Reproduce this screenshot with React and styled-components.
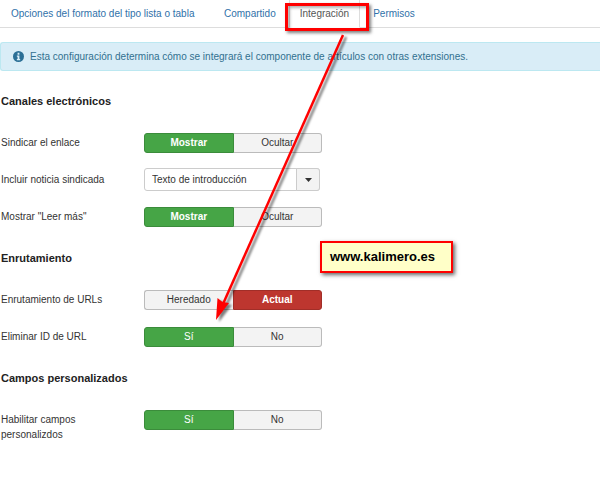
import { useState } from 'react';
import styled, { createGlobalStyle } from 'styled-components';

const tabs = ['Opciones del formato del tipo lista o tabla', 'Compartido', 'Integración', 'Permisos'];

const Toggle = ({ name, label, options, initial, bold }) => {
    const [value, setValue] = useState(initial);

    return (
        <Row>
            <Label as="span" id={`${name}-label`}>{label}</Label>
            <Group role="radiogroup" aria-labelledby={`${name}-label`}>
                {options.map((option) => (
                    <Option
                        key={option.text}
                        $color={value === option.text ? option.color : null}
                        $bold={bold && value === option.text}
                    >
                        <Radio
                            type="radio"
                            name={name}
                            checked={value === option.text}
                            onChange={() => setValue(option.text)}
                        />
                        {option.text}
                    </Option>
                ))}
            </Group>
        </Row>
    );
};

const show = [{ text: 'Mostrar', color: 'green' }, { text: 'Ocultar', color: 'red' }];
const routing = [{ text: 'Heredado', color: 'green' }, { text: 'Actual', color: 'red' }];
const yesNo = [{ text: 'Sí', color: 'green' }, { text: 'No', color: 'red' }];

const App = () => {
    const [active, setActive] = useState('Integración');

    return (
        <Page>
            <GlobalStyle />
            <Tabs>
                {tabs.map((tab) => (
                    <Tab key={tab} href="#" $active={tab === active} onClick={() => setActive(tab)}>
                        {tab}
                    </Tab>
                ))}
            </Tabs>

            <Alert>
                <svg width="11" height="11" viewBox="0 0 12 12" aria-hidden="true">
                    <circle cx="6" cy="6" r="6" fill="#2b6f96" />
                    <path d="M5 2h2v2H5zM4.2 5H7v3.700h.8V10H4.2V8.700H5V6.200h-.8z" fill="#d9edf7" />
                </svg>
                Esta configuración determina cómo se integrará el componente de artículos con otras extensiones.
            </Alert>

            <Heading>Canales electrónicos</Heading>
            <Fields>
                <Toggle name="feed" label="Sindicar el enlace" options={show} initial="Mostrar" bold />
                <Row>
                    <Label htmlFor="summary">Incluir noticia sindicada</Label>
                    <SelectBox>
                        <Select id="summary">
                            <option>Texto de introducción</option>
                            <option>Texto completo</option>
                        </Select>
                        <Caret>
                            <svg width="7" height="4" viewBox="0 0 7 4" aria-hidden="true">
                                <path d="M0 0h7L3.500 4z" fill="#333" />
                            </svg>
                        </Caret>
                    </SelectBox>
                </Row>
                <Toggle name="readmore" label={'Mostrar "Leer más"'} options={show} initial="Mostrar" bold />
            </Fields>

            <Heading>Enrutamiento</Heading>
            <Fields>
                <Toggle name="routing" label="Enrutamiento de URLs" options={routing} initial="Actual" bold />
                <Toggle name="ids" label="Eliminar ID de URL" options={yesNo} initial="Sí" />
            </Fields>

            <Heading>Campos personalizados</Heading>
            <Fields>
                <Toggle name="custom" label="Habilitar campos personalizdos" options={yesNo} initial="Sí" />
            </Fields>

            <Marker />
            <Arrow width="170" height="310" viewBox="200 25 170 310" aria-hidden="true">
                <path d="M343 35L223 304" stroke="#f00" strokeWidth="2.500" />
                <path d="M216 320L217.500 298L222.500 302L229 303Z" fill="#f00" />
            </Arrow>
            <Note>www.kalimero.es</Note>
        </Page>
    );
};

export default App;

const GlobalStyle = createGlobalStyle`
    * {
        box-sizing: border-box;
    }
    body {
        margin: 0;
        background: #fff;
        color: #333;
        font-family: "Liberation Sans", Arial, sans-serif;
        font-size: 10px;
        line-height: 15px;
    }
`;

const Page = styled.main`
    position: relative;
    padding-bottom: 24px;
`;

const Tabs = styled.nav`
    display: grid;
    grid-template-columns: 211px repeat(3, max-content);
    gap: 2px;
    height: 28px;
    border-bottom: 1px solid #ddd;
`;

const Tab = styled.a`
    height: 28px;
    padding: 6px 10px;
    border: 1px solid ${(props) => (props.$active ? '#ddd' : 'transparent')};
    border-top: 0;
    border-bottom-color: ${(props) => (props.$active ? '#fff' : 'transparent')};
    color: ${(props) => (props.$active ? '#555' : '#3071a9')};
    text-decoration: none;
    white-space: nowrap;
`;

const Alert = styled.div`
    display: flex;
    align-items: center;
    gap: 6px;
    margin: 14px 0 23px;
    padding: 6px 12px;
    border: 1px solid #bce8f1;
    border-right: 0;
    border-radius: 3px 0 0 3px;
    background: #d9edf7;
    color: #31708f;
`;

const Heading = styled.h2`
    margin: 22px 0 22px 1px;
    color: #222;
    font-size: 11px;
    line-height: 15px;
`;

const Fields = styled.div`
    display: flex;
    flex-direction: column;
    gap: 13px;
`;

const Row = styled.div`
    display: grid;
    grid-template-columns: 143px 178px;
    min-height: 24px;
    padding-left: 1px;
`;

const Label = styled.label`
    padding: 4px 24px 0 0;
`;

const Group = styled.div`
    display: flex;
    height: 20px;
    margin-top: 2px;
`;

const fills = {
    green: ['#46a546', '#3b8c3b'],
    red: ['#bd362f', '#a12e28'],
};

const Option = styled.label`
    position: relative;
    flex: 1;
    border: 1px solid ${(props) => (props.$color ? fills[props.$color][1] : '#bbb')};
    background: ${(props) => (props.$color ? fills[props.$color][0] : '#f3f3f3')};
    color: ${(props) => (props.$color ? '#fff' : '#333')};
    font-weight: ${(props) => (props.$bold ? 'bold' : 'normal')};
    line-height: 18px;
    text-align: center;

    &:first-child {
        border-right-width: ${(props) => (props.$color ? '1px' : '0')};
        border-radius: 3px 0 0 3px;
    }
    &:last-child {
        border-left-width: ${(props) => (props.$color ? '1px' : '0')};
        border-radius: 0 3px 3px 0;
    }
`;

const Radio = styled.input`
    position: absolute;
    inset: 0;
    margin: 0;
    opacity: 0;
`;

const SelectBox = styled.div`
    display: grid;
    width: 176px;
    height: 23px;
`;

const Select = styled.select`
    grid-area: 1 / 1;
    appearance: none;
    padding: 0 30px 0 7px;
    border: 1px solid #ccc;
    border-radius: 3px;
    background: #fff;
    color: #333;
    font: inherit;
`;

const Caret = styled.span`
    grid-area: 1 / 1;
    justify-self: end;
    display: flex;
    align-items: center;
    justify-content: center;
    width: 24px;
    border: 1px solid #ccc;
    border-radius: 0 3px 3px 0;
    background: #f3f3f3;
    pointer-events: none;
`;

const Marker = styled.div`
    position: absolute;
    top: 3px;
    left: 285px;
    width: 84px;
    height: 28px;
    border: 3px solid #f00;
    box-shadow: 2px 2px 3px rgba(0, 0, 0, 0.5), inset 2px 2px 3px rgba(0, 0, 0, 0.3);
    pointer-events: none;
`;

const Arrow = styled.svg`
    position: absolute;
    top: 25px;
    left: 200px;
    filter: drop-shadow(3px 2px 1px rgba(0, 0, 0, 0.5));
    pointer-events: none;
`;

const Note = styled.div`
    position: absolute;
    top: 241px;
    left: 320px;
    width: 133px;
    height: 32px;
    padding: 6px 8px;
    border: 2px solid #f00;
    background: #ffffc8;
    box-shadow: 2px 2px 4px rgba(0, 0, 0, 0.6);
    color: #000;
    font-size: 13px;
    font-weight: bold;
`;
